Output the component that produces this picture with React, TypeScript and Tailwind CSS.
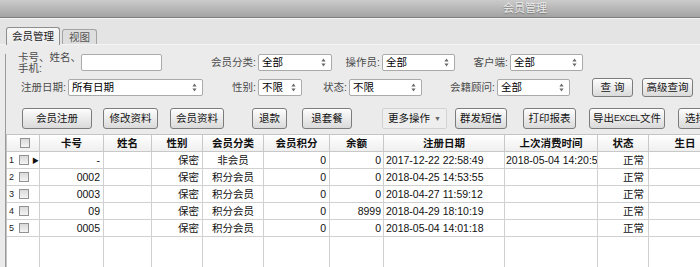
import React from 'react';

const Arrows = () => (
  <svg width="5" height="9" viewBox="0 0 5 9" className="shrink-0">
    <path d="M2.5 0.5 L4.6 3.6 H0.4Z M2.5 8.5 L4.6 5.4 H0.4Z" fill="#6a6a6a" />
  </svg>
);

function Select({ w, value }: { w: string; value: string }) {
  return (
    <div className={`${w} h-[17px] shrink-0 bg-white border border-[#aaaaaa] rounded-[2px] flex items-center justify-between pl-[3px] pr-[5px] text-black leading-none`}>
      <span>{value}</span>
      <Arrows />
    </div>
  );
}

function Label({ w, children }: { w: string; children: React.ReactNode }) {
  return <div className={`${w} shrink-0 text-right pr-[2px] text-[#4b4b4b] leading-none whitespace-nowrap`}>{children}</div>;
}

function Btn({ cls, children }: { cls: string; children: React.ReactNode }) {
  return (
    <div className={`${cls} shrink-0 border border-[#7c7c7c] rounded-[3px] bg-linear-to-b from-[#fdfdfd] to-[#dadada] shadow-[inset_0_1px_0_#ffffff] flex items-center justify-center text-[#141414] leading-none whitespace-nowrap overflow-hidden`}>
      {children}
    </div>
  );
}

const Check = () => <div className="w-[10px] h-[10px] shrink-0 border border-[#929292] bg-linear-to-b from-[#d9d9d9] to-[#f4f4f4]" />;

const headers = ['卡号', '姓名', '性别', '会员分类', '会员积分', '余额', '注册日期', '上次消费时间', '状态', '生日'];

const rows = [
  ['-', '', '保密', '非会员', '0', '0', '2017-12-22 22:58:49', '2018-05-04 14:20:59', '正常', ''],
  ['0002', '', '保密', '积分会员', '0', '0', '2018-04-25 14:53:55', '', '正常', ''],
  ['0003', '', '保密', '积分会员', '0', '0', '2018-04-27 11:59:12', '', '正常', ''],
  ['09', '', '保密', '积分会员', '0', '8999', '2018-04-29 18:10:19', '', '正常', ''],
  ['0005', '', '保密', '积分会员', '0', '0', '2018-05-04 14:01:18', '', '正常', ''],
];

// alignment per data column
const align = [
  'justify-end pr-[3px]',
  'justify-start pl-[3px]',
  'justify-end pr-[3px]',
  'justify-center',
  'justify-end pr-[3px]',
  'justify-end pr-[2px]',
  'justify-start pl-[2px]',
  'justify-start pl-[1px]',
  'justify-end pr-[4px]',
  'justify-start pl-[3px]',
];

export default function App() {
  return (
    <div className="w-[700px] h-[267px] overflow-hidden bg-[#ebebeb] font-['Liberation_Sans','Noto_Sans_CJK_SC',sans-serif] text-[10.5px]">
      {/* title bar */}
      <div className="h-[18px] bg-linear-to-b from-[#cbcbcb] to-[#a3a3a3] border-b border-[#7e7e7e] flex items-center pl-[503px]">
        <span className="text-[11px] leading-none text-[#ececec] text-shadow-[0_1px_1px_#7a7a7a]">会员管理</span>
      </div>

      {/* tabs */}
      <div className="h-[27px] bg-[#e4e4e4] border-t border-[#f4f4f4] border-b border-[#9c9c9c] flex items-end pl-[6px] gap-[2px]">
        <div className="relative z-10 -mb-px h-[18px] w-[54px] bg-linear-to-b from-[#f7f7f7] to-[#ebebeb] border border-b-0 border-[#8e8e8e] rounded-t-[3px] flex items-center justify-center text-[#1a1a1a] leading-none">
          会员管理
        </div>
        <div className="h-[15px] w-[35px] bg-[#dedede] border border-b-0 border-[#a3a3a3] rounded-t-[3px] flex items-center justify-center text-[#555] leading-none">
          视图
        </div>
      </div>

      {/* panel */}
      <div className="ml-[5px] border-l border-[#9a9a9a] h-[222px]">
        {/* filter row 1 */}
        <div className="flex items-center h-[17px] mt-[9px]">
          <div className="ml-[12px] w-[63px] shrink-0 text-[#4b4b4b] leading-[11px]">
            <div>卡号、姓名、</div>
            <div>手机:</div>
          </div>
          <div className="w-[81px] h-[17px] shrink-0 bg-white border border-[#aaaaaa] rounded-[2px]" />
          <Label w="w-[96px]">会员分类:</Label>
          <Select w="w-[74px]" value="全部" />
          <Label w="w-[50px]">操作员:</Label>
          <Select w="w-[73px]" value="全部" />
          <Label w="w-[55px]">客户端:</Label>
          <Select w="w-[73px]" value="全部" />
        </div>

        {/* filter row 2 */}
        <div className="flex items-center h-[19px] mt-[7px]">
          <Label w="w-[62px]">注册日期:</Label>
          <Select w="w-[135px]" value="所有日期" />
          <Label w="w-[55px]">性别:</Label>
          <Select w="w-[44px]" value="不限" />
          <Label w="w-[47px]">状态:</Label>
          <Select w="w-[73px]" value="不限" />
          <Label w="w-[75px]">会籍顾问:</Label>
          <Select w="w-[73px]" value="全部" />
          <Btn cls="ml-[22px] w-[41px] h-[19px]">查&nbsp;询</Btn>
          <Btn cls="ml-[9px] w-[51px] h-[19px]">高级查询</Btn>
        </div>

        {/* action buttons */}
        <div className="flex items-center h-[21px] mt-[11px]">
          <Btn cls="ml-[16px] w-[70px] h-[21px]">会员注册</Btn>
          <Btn cls="ml-[11px] w-[55px] h-[21px]">修改资料</Btn>
          <Btn cls="ml-[12px] w-[54px] h-[21px]">会员资料</Btn>
          <Btn cls="ml-[28px] w-[35px] h-[21px]">退款</Btn>
          <Btn cls="ml-[15px] w-[50px] h-[21px]">退套餐</Btn>
          <div className="ml-[30px] w-[65px] h-[21px] shrink-0 border border-[#d2d2d2] rounded-[2px] bg-[#eeeeee] flex items-center justify-center gap-[4px] text-[#141414] leading-none">
            <span>更多操作</span>
            <span className="text-[7px] text-[#666]">▼</span>
          </div>
          <Btn cls="ml-[8px] w-[52px] h-[21px]">群发短信</Btn>
          <Btn cls="ml-[16px] w-[53px] h-[21px]">打印报表</Btn>
          <Btn cls="ml-[13px] w-[76px] h-[21px]">
            导出<span className="text-[8.5px] tracking-[-0.4px]">EXCEL</span>文件
          </Btn>
          <Btn cls="ml-[13px] w-[60px] h-[21px] justify-start pl-[6px]">选择会员</Btn>
        </div>

        {/* grid */}
        <div className="mt-[5px] w-[723px] border-l border-t border-[#c4c4c4] bg-white grid grid-cols-[33px_64px_48px_51px_61px_66px_54px_121px_93px_51px_73px]">
          <div className="h-[17px] border-r border-b border-[#c8c8c8] bg-linear-to-b from-[#ffffff] to-[#efefef] flex items-center pl-[13px]">
            <Check />
          </div>
          {headers.map((h) => (
            <div key={h} className="h-[17px] border-r border-b border-[#c8c8c8] bg-linear-to-b from-[#ffffff] to-[#efefef] flex items-center justify-center font-bold text-[#111] leading-none">
              {h}
            </div>
          ))}

          {rows.map((r, i) => (
            <React.Fragment key={i}>
              <div className="h-[17px] border-r border-b border-[#d0d0d0] flex items-center">
                <span className="w-[12px] pl-[2px] text-[9px] leading-none text-[#222]">{i + 1}</span>
                <Check />
                {i === 0 && <span className="ml-[3px] text-[7px] leading-none text-[#111]">▶</span>}
              </div>
              {r.map((c, j) => (
                <div key={j} className={`h-[17px] border-r border-b border-[#d0d0d0] flex items-center overflow-hidden whitespace-nowrap leading-none text-[#111] ${align[j]}`}>
                  {c}
                </div>
              ))}
            </React.Fragment>
          ))}

          {Array.from({ length: 11 }).map((_, k) => (
            <div key={k} className="h-[40px] border-r border-[#d0d0d0]" />
          ))}
        </div>
      </div>
    </div>
  );
}
